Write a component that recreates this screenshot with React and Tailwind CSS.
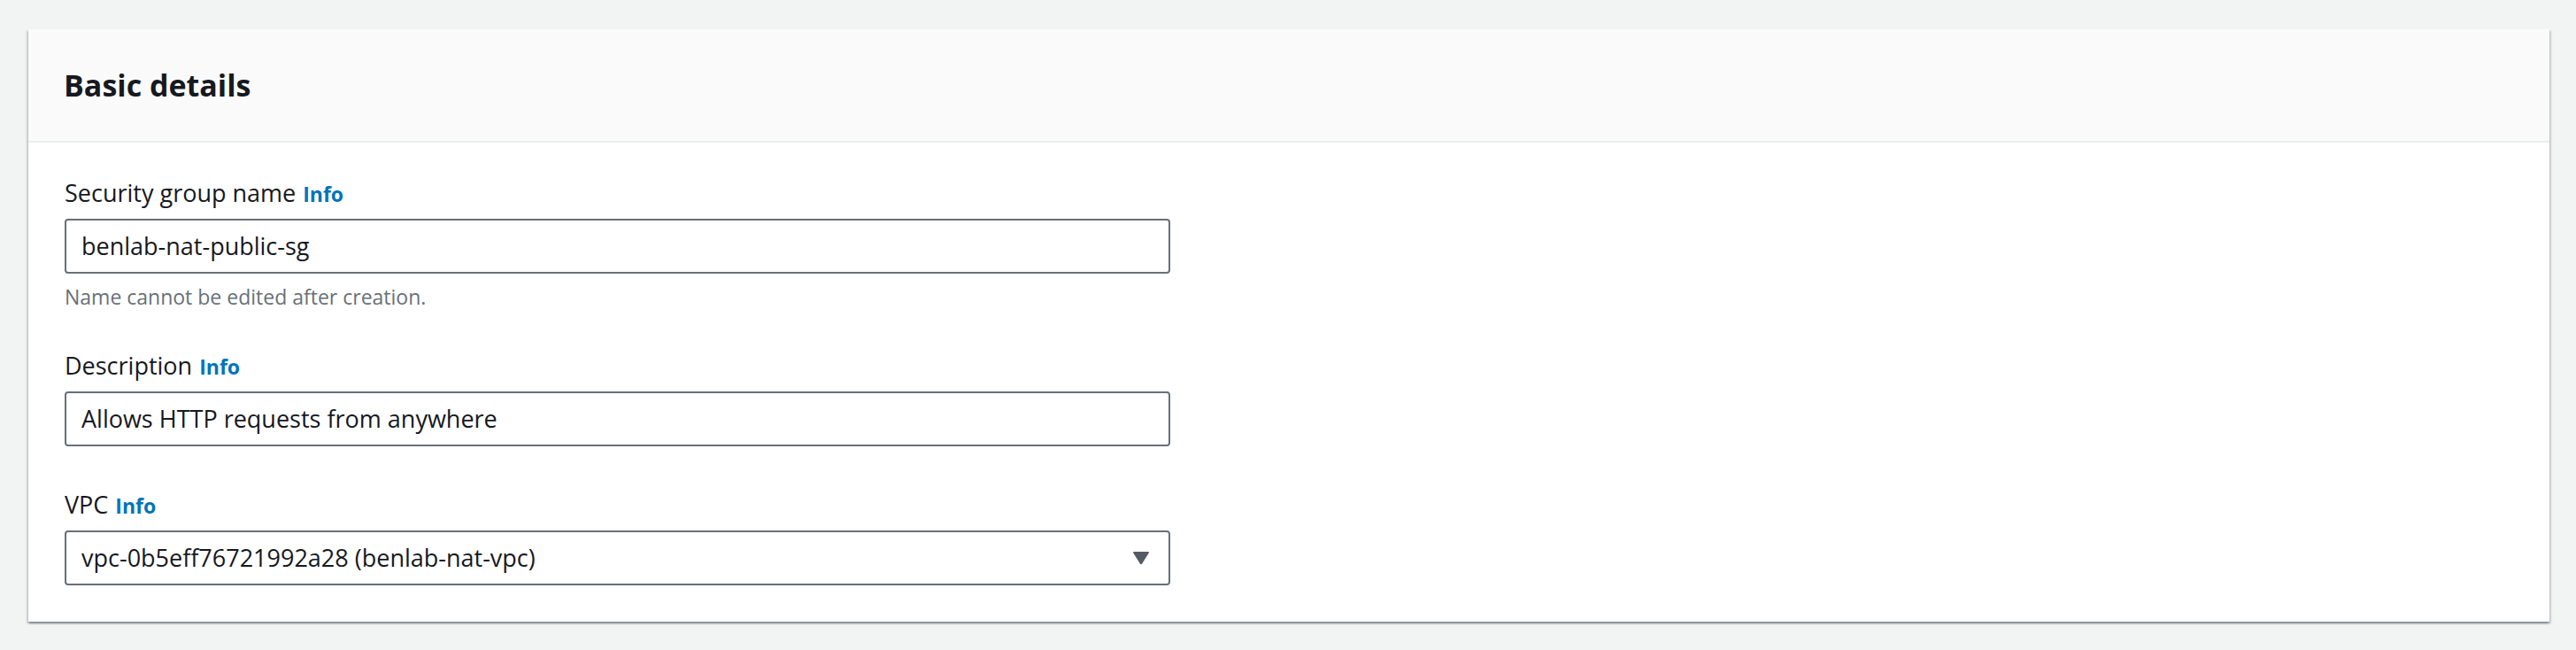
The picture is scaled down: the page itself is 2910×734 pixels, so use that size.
import React from "react";

const font = { fontFamily: '"Open Sans", "Noto Sans", sans-serif' };

function Label({ text, className = "" }) {
  return (
    <div className={`h-[42px] text-[27px] leading-[42px] text-[#16191f] ${className}`}>
      <span>{text}</span>
      <a className="ml-[8px] text-[23px] font-bold leading-none text-[#0073bb]">Info</a>
    </div>
  );
}

function Input({ value }) {
  return (
    <div className="mt-[8px] flex h-[62px] w-[1249px] items-center rounded-[4px] border-2 border-[#687078] bg-white pl-[17px] text-[27px] text-[#16191f]">
      {value}
    </div>
  );
}

export default function App() {
  return (
    <div className="min-h-[734px] w-full bg-[#f2f3f3] pl-[32px] pr-[30px] pt-[33px]" style={font}>
      <div className="bg-white shadow-[0_2px_2px_0_rgba(0,28,36,0.35),2px_2px_2px_0_rgba(0,28,36,0.12),-2px_2px_2px_0_rgba(0,28,36,0.12)]">
        <div className="flex h-[128px] items-center border-b-2 border-[#eaeded] bg-[#fafafa] px-[40px]">
          <h2 className="text-[34px] font-bold leading-[42px] text-[#16191f]">Basic details</h2>
        </div>
        <div className="flex flex-col px-[41px] pb-[41px] pt-[36px]">
          <Label text="Security group name" />
          <Input value="benlab-nat-public-sg" />
          <div className="mt-[11px] text-[23px] leading-[31px] text-[#687078]">
            Name cannot be edited after creation.
          </div>
          <Label text="Description" className="mt-[41px]" />
          <Input value="Allows HTTP requests from anywhere" />
          <Label text="VPC" className="mt-[45px]" />
          <div className="mt-[8px] flex h-[62px] w-[1249px] items-center justify-between rounded-[4px] border-2 border-[#687078] bg-white pl-[17px] pr-[21px] text-[27px] text-[#16191f]">
            <span>vpc-0b5eff76721992a28 (benlab-nat-vpc)</span>
            <svg width="20" height="16" viewBox="0 0 20 16" aria-hidden="true">
              <path d="M2 1 H18 Q19.5 1 18.7 2.4 L11.2 14.6 Q10 16 8.8 14.6 L1.3 2.4 Q0.5 1 2 1 Z" fill="#545b64" />
            </svg>
          </div>
        </div>
      </div>
    </div>
  );
}
